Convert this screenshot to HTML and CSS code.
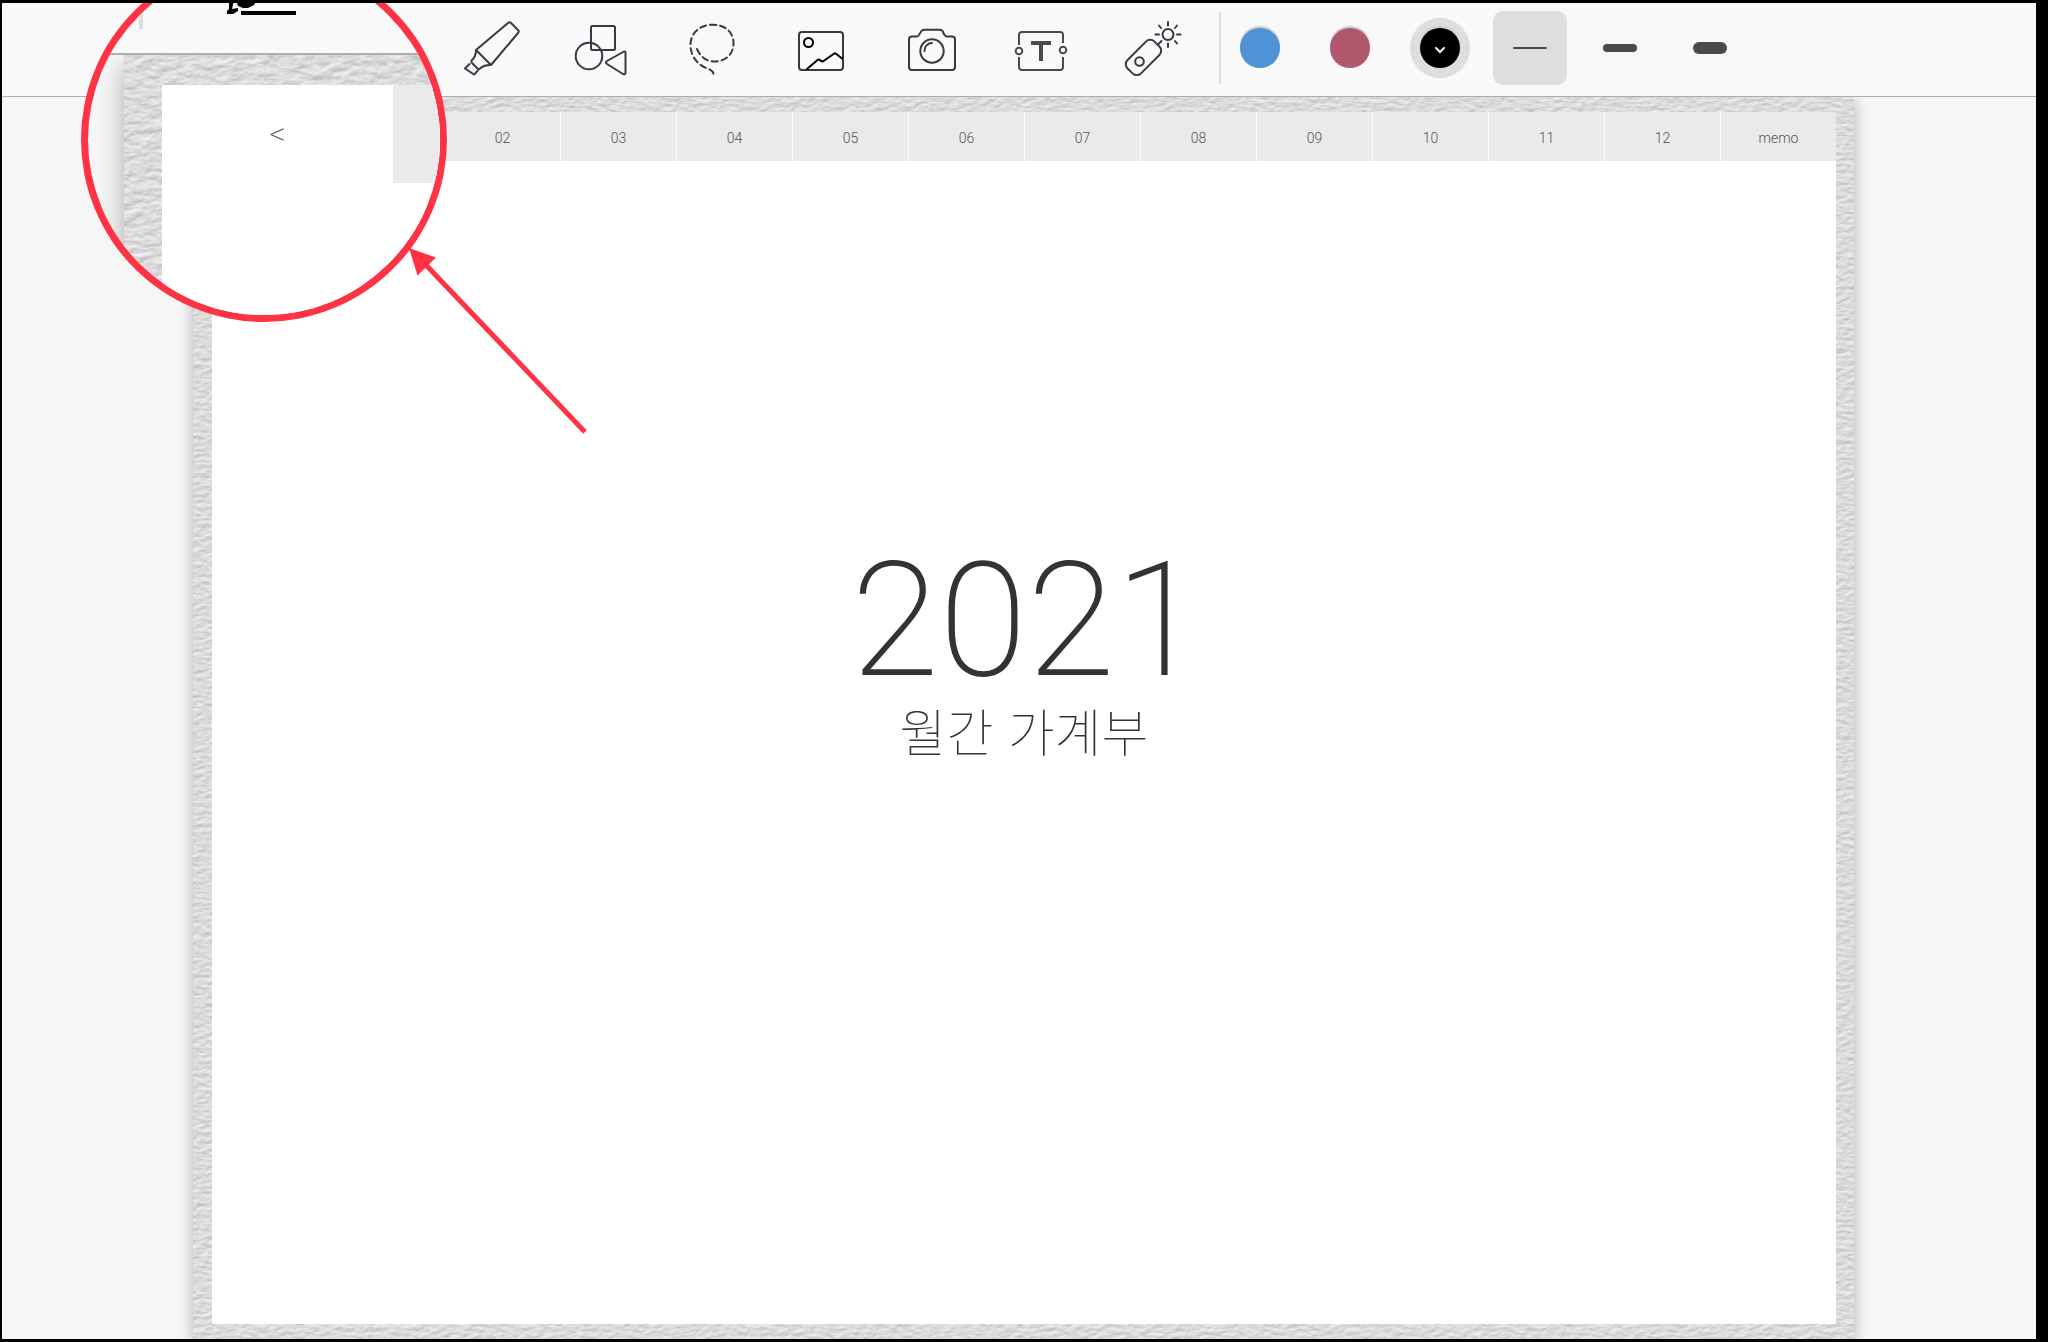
FILE: index.html
```html
<!DOCTYPE html>
<html lang="ko">
<head>
<meta charset="utf-8">
<title>2021 월간 가계부</title>
<link rel="stylesheet" href="styles.css">
</head>
<body>
<div class="screen">
  <header class="toolbar">
    <div class="tools">
      <button class="tool" type="button" aria-label="Highlighter">
        <svg width="56" height="56" viewBox="464 20 56 56"><path d="M476 50 508 23Q509.500 21.500 511 23L518 30Q519.500 31.500 518 33L491 65Z M476 50Q476 57 471.500 60.500Q471 62 472.500 63.500L478 69Q479 70 480.500 68Q485 64.500 491 65 M469.500 64 465 68.500 474 74.500 477.500 71"/></svg>
      </button>
      <button class="tool" type="button" aria-label="Shapes">
        <svg width="56" height="56" viewBox="574 20 56 56"><rect x="591" y="26" width="24" height="24" rx="1.500"/><circle cx="589" cy="56" r="13.300"/><path d="M624 51.500Q625.500 51 625.500 53V72.500Q625.500 75 623 74L607 64Q605 62.500 607 61Z"/></svg>
      </button>
      <button class="tool" type="button" aria-label="Lasso">
        <svg width="56" height="56" viewBox="684 20 56 56"><path stroke-dasharray="6 4" d="M697 49C700 56 706 61.500 714 61.500C725 61.500 733.500 55 733.500 43C733.500 32 725 24.700 712.500 24.700C700 24.700 690.500 33 690.500 45C690.500 56 697 64 706 68C711 69.500 713.500 71.500 714 75.500"/></svg>
      </button>
      <button class="tool" type="button" aria-label="Image">
        <svg width="56" height="56" viewBox="794 20 56 56"><rect x="799" y="32" width="44" height="38" rx="3"/><g class="ink"><circle cx="808.500" cy="42.500" r="4.500"/><path d="M807 69 817.500 60Q819 59 820.500 60.500Q822.500 62.500 825 60L833.500 54Q835.500 52.500 837 54.500L842 58.500"/></g></svg>
      </button>
      <button class="tool" type="button" aria-label="Camera">
        <svg width="56" height="56" viewBox="904 20 56 56"><path d="M912 36.500H916.500Q918.500 36.500 919.500 34L921.500 31Q922.500 29.800 924 29.800H940Q941.500 29.800 942.500 31L944.500 35Q945.500 36.500 947 36.500H952Q955 36.500 955 39.500V67Q955 70 952 70H912Q909 70 909 67V39.500Q909 36.500 912 36.500Z"/><circle cx="932" cy="51" r="11.700"/><path d="M924.500 51C924.500 46 928 43 932 43"/></svg>
      </button>
      <button class="tool tool-text" type="button" aria-label="Text">
        <svg width="56" height="56" viewBox="1014 20 56 56"><path d="M1019 45V35Q1019 32 1022 32H1060Q1063 32 1063 35V43M1063 57V67Q1063 70 1060 70H1022Q1019 70 1019 67V57"/><circle cx="1019" cy="51" r="3.300"/><circle cx="1063" cy="50" r="3.300"/><path class="bar" d="M1031 43H1051M1041 43V61"/></svg>
      </button>
      <button class="tool" type="button" aria-label="Laser pointer">
        <svg width="60" height="56" viewBox="1122 20 60 56"><rect x="-19" y="-9.500" width="38" height="19" rx="6" transform="translate(1143.500 57.500) rotate(-45)"/><circle cx="1139.500" cy="61.500" r="4.300"/><circle cx="1168" cy="34.500" r="5.500"/><path d="M1168 22V25.500M1168 43.500V47M1155.500 34.500H1159M1177 34.500H1180.500M1159 25.500 1161 28M1177 25.500 1175 28M1177 43.500 1175 41M1161.500 41 1158.500 44"/></svg>
      </button>
    </div>
    <div class="presets">
      <button class="preset" type="button" aria-label="Blue"><span class="swatch blue"></span></button>
      <button class="preset" type="button" aria-label="Red"><span class="swatch red"></span></button>
      <button class="preset" type="button" aria-label="Black"><span class="ring"><span class="swatch black"><svg width="12" height="8" viewBox="0 0 12 8"><path d="M2 2 6 6 10 2"/></svg></span></span></button>
      <button class="preset selected" type="button" aria-label="Thin line"><span class="stroke thin"></span></button>
      <button class="preset" type="button" aria-label="Medium line"><span class="stroke medium"></span></button>
      <button class="preset" type="button" aria-label="Thick line"><span class="stroke thick"></span></button>
    </div>
  </header>

  <main class="desk">
    <div class="cover">
      <svg class="grain" aria-hidden="true">
        <filter id="grain" x="0" y="0" width="100%" height="100%" color-interpolation-filters="sRGB">
          <feTurbulence type="fractalNoise" baseFrequency="0.12 0.24" numOctaves="4" seed="8"/>
          <feDiffuseLighting lighting-color="#fdfdfd" surfaceScale="0.500" diffuseConstant="1"><feDistantLight azimuth="250" elevation="60"/></feDiffuseLighting>
        </filter>
        <rect width="100%" height="100%" filter="url(#grain)"/>
      </svg>
      <div class="paper">
        <nav class="tabs">
          <a class="tab first" href="#m02">02</a>
          <a class="tab" href="#m03">03</a>
          <a class="tab" href="#m04">04</a>
          <a class="tab" href="#m05">05</a>
          <a class="tab" href="#m06">06</a>
          <a class="tab" href="#m07">07</a>
          <a class="tab" href="#m08">08</a>
          <a class="tab" href="#m09">09</a>
          <a class="tab" href="#m10">10</a>
          <a class="tab" href="#m11">11</a>
          <a class="tab" href="#m12">12</a>
          <a class="tab" href="#memo">memo</a>
        </nav>
        <div class="title">
          <h1 class="year">2021</h1>
          <p class="subtitle">월간 가계부</p>
        </div>
      </div>
    </div>
  </main>

  <div class="loupe">
    <svg class="loupe-bar" viewBox="88 -36 352 89" aria-hidden="true">
      <path fill="#ddd" d="M139 0H143V29H139Z"/>
      <path d="M229 0H234L232 9 238 8V11L233 14H227V11L229 9ZM236 0H257L254 5 248 8H243L238 6ZM241 11H296V15H241Z"/>
    </svg>
    <div class="loupe-desk">
      <div class="loupe-cover">
        <svg class="grain" aria-hidden="true">
          <filter id="grain-large" x="0" y="0" width="100%" height="100%" color-interpolation-filters="sRGB">
            <feTurbulence type="fractalNoise" baseFrequency="0.07 0.13" numOctaves="4" seed="4"/>
            <feDiffuseLighting lighting-color="#fdfdfd" surfaceScale="0.800" diffuseConstant="1"><feDistantLight azimuth="250" elevation="60"/></feDiffuseLighting>
          </filter>
          <rect width="100%" height="100%" filter="url(#grain-large)"/>
        </svg>
        <div class="loupe-paper">
          <a class="back" href="#back">&lt;</a>
          <span class="loupe-tab"></span>
        </div>
      </div>
    </div>
  </div>

  <svg class="arrow" width="180" height="190" viewBox="408 246 180 190" aria-hidden="true">
    <path d="M409 248 436 257.500 417.500 275.500Z"/>
    <path class="shaft" d="M425 264 585 432"/>
  </svg>
</div>
</body>
</html>
```

FILE: styles.css
```css
* {
  box-sizing: border-box;
}

body {
  margin: 0;
  background: #000;
  font-family: Roboto, "Noto Sans CJK KR", sans-serif;
}

button {
  padding: 0;
  border: 0;
  background: none;
}

a {
  color: inherit;
  text-decoration: none;
}

.screen {
  position: relative;
  display: flex;
  flex-direction: column;
  height: 100vh;
  border: solid #000;
  border-width: 3px 12px 3px 2px;
  background: #f6f6f6;
  overflow: hidden;
}

/* Toolbar */
.toolbar {
  display: flex;
  align-items: center;
  flex: none;
  height: 94px;
  padding: 0 0 4px 435px;
  border-bottom: 1px solid #adadad;
  background: #f9f9f9;
}

.tools {
  display: flex;
}

.tool {
  display: flex;
  justify-content: center;
  width: 110px;
}

.tool svg {
  fill: none;
  stroke: #373a45;
  stroke-width: 2;
  stroke-linecap: round;
  stroke-linejoin: round;
}

.tool .ink {
  stroke: #000;
}

.tool-text svg {
  stroke: #4a4a4a;
  stroke-linecap: butt;
}

.tool-text .bar {
  stroke-width: 4;
}

.presets {
  display: flex;
  align-items: center;
  gap: 16px;
  height: 72px;
  margin-left: 12px;
  padding-left: 2px;
  border-left: 2px solid #ddd;
}

.preset {
  display: flex;
  align-items: center;
  justify-content: center;
  width: 74px;
  height: 74px;
  border-radius: 10px;
}

.selected {
  background: #dedee0;
}

.swatch {
  display: flex;
  align-items: center;
  justify-content: center;
  width: 40px;
  height: 40px;
  border-radius: 50%;
  box-shadow: 0 -2px 1px #c8c8c8;
}

.blue {
  background: #4d93d5;
}

.red {
  background: #b0596c;
}

.black {
  background: #000;
}

.swatch svg {
  margin-top: 4px;
  fill: none;
  stroke: #fff;
  stroke-width: 2;
  stroke-linecap: round;
}

.ring {
  display: flex;
  align-items: center;
  justify-content: center;
  width: 60px;
  height: 60px;
  border-radius: 50%;
  background: #dedee1;
}

.stroke {
  width: 34px;
  border-radius: 6px;
  background: #4a4a4a;
}

.thin {
  height: 2px;
}

.medium {
  height: 8px;
}

.thick {
  height: 12px;
}

/* Planner */
.desk {
  display: flex;
  flex: 1;
  min-height: 0;
  padding: 0 182px 0 191px;
  overflow: hidden;
}

.cover {
  position: relative;
  display: flex;
  flex: 1;
  padding: 15px 18px 15px 19px;
  background: #dcdcdc;
  box-shadow: 0 4px 14px #b0b0b0;
}

.grain {
  position: absolute;
  inset: 0;
  width: 100%;
  height: 100%;
}

.paper {
  position: relative;
  display: flex;
  flex: 1;
  flex-direction: column;
  background: #fff;
}

.tabs {
  display: grid;
  grid-template-columns: repeat(14, 1fr);
  height: 49px;
  background: #eaeaea;
}

.tab {
  display: flex;
  align-items: center;
  justify-content: center;
  padding-top: 2px;
  border-left: 1px solid #fafafa;
  color: #555;
  font-size: 14px;
  font-weight: 300;
}

.first {
  grid-column: 3;
}

.title {
  display: flex;
  flex-direction: column;
  align-items: center;
  padding-top: 384px;
}

.year {
  margin: 0;
  padding-left: 6px;
  color: #333;
  font-size: 160px;
  font-weight: 200;
  line-height: 152px;
}

.subtitle {
  margin: 0;
  color: #333;
  font-family: "Noto Sans CJK KR", sans-serif;
  font-size: 51px;
  font-weight: 100;
  line-height: 66px;
}

/* Magnified corner */
.loupe {
  position: absolute;
  top: -46px;
  left: 79px;
  display: flex;
  flex-direction: column;
  width: 366px;
  height: 365px;
  border: 7px solid #ff3344;
  border-radius: 50%;
  background: #f6f6f6;
  overflow: hidden;
}

.loupe-bar {
  flex: none;
  height: 91px;
  border-bottom: 2px solid #adadad;
  background: #f9f9f9;
}

.loupe-desk {
  display: flex;
  flex: 1;
  padding-left: 36px;
  overflow: hidden;
}

.loupe-cover {
  position: relative;
  display: flex;
  flex: 1;
  padding: 30px 0 0 38px;
  box-shadow: 0 12px 24px #aaa;
}

.loupe-paper {
  position: relative;
  display: flex;
  align-items: flex-start;
  flex: 1;
  background: #fff;
}

.back {
  display: flex;
  align-items: center;
  justify-content: center;
  width: 231px;
  height: 98px;
  color: #555;
  font-size: 32px;
  font-weight: 200;
}

.loupe-tab {
  flex: 1;
  height: 98px;
  background: #eaeaea;
}

.arrow {
  position: absolute;
  top: 243px;
  left: 406px;
  fill: #ff3344;
}

.shaft {
  stroke: #ff3344;
  stroke-width: 5;
}
```
